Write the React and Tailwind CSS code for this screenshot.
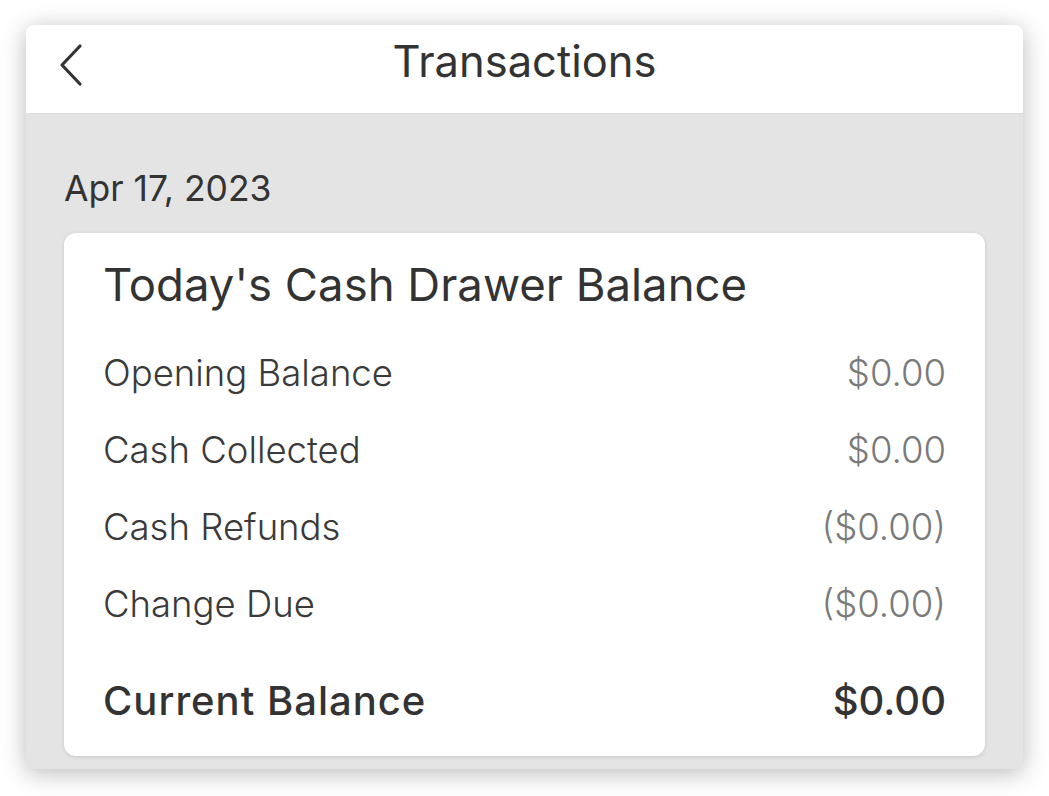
import React from 'react';

const ROWS = [
  { label: 'Opening Balance', value: '$0.00' },
  { label: 'Cash Collected', value: '$0.00' },
  { label: 'Cash Refunds', value: '($0.00)' },
  { label: 'Change Due', value: '($0.00)' },
];

function BackChevron() {
  return (
    <svg width="28" height="46" viewBox="0 0 28 46" fill="none">
      <path d="M23 4 L5 23 L23 42" stroke="#333" strokeWidth="3.2" strokeLinecap="round" strokeLinejoin="round" />
    </svg>
  );
}

export default function App() {
  return (
    <div
      className="w-[1049px] h-[796px] bg-white px-[26px] pt-[25px] pb-[27px]"
      style={{ fontFamily: 'Inter, Roboto, sans-serif' }}
    >
      <div className="h-full flex flex-col rounded-[8px] overflow-hidden bg-[#e4e4e4] shadow-[0_4px_24px_rgba(0,0,0,0.28)]">
        <div className="h-[89px] bg-white relative flex items-center justify-center border-b border-[#dcdcdc]">
          <div className="absolute left-[31px] top-[17px]">
            <BackChevron />
          </div>
          <h1 className="text-[43.5px] leading-none text-[#333] pb-[14px]">Transactions</h1>
        </div>

        <div className="flex-1 px-[38px] pt-[57px]">
          <p className="text-[35.5px] leading-none text-[#333] mb-[26px]">Apr 17, 2023</p>

          <div className="bg-white rounded-[12px] shadow-[0_1px_4px_rgba(0,0,0,0.12)] px-[39px] pt-[24px] pb-[12px]">
            <h2 className="text-[45.5px] leading-[56px] text-[#333] mb-[22px]">Today's Cash Drawer Balance</h2>
            {ROWS.map(r => (
              <div key={r.label} className="flex justify-between items-center h-[77px] text-[36.5px] font-light">
                <span className="text-[#3a3a3a]">{r.label}</span>
                <span className="text-[#7a7a7a]">{r.value}</span>
              </div>
            ))}
            <div className="flex justify-between items-center h-[86px] text-[40px] font-medium text-[#333] mt-[15px]">
              <span className="tracking-[1px]">Current Balance</span>
              <span>$0.00</span>
            </div>
          </div>
        </div>
      </div>
    </div>
  );
}
